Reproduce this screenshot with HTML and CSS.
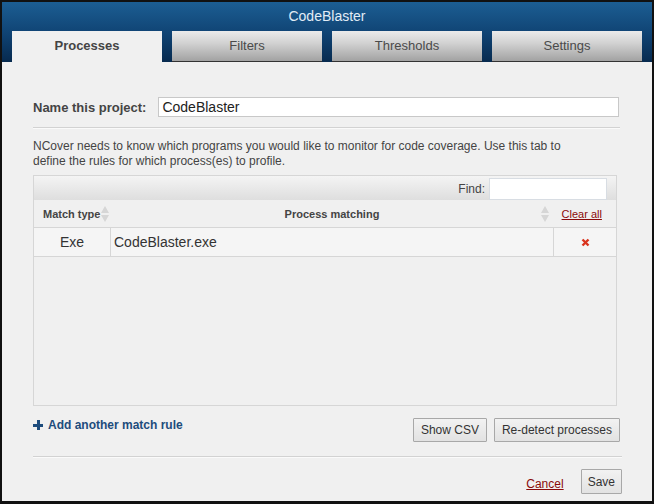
FILE: index.html
```html
<!DOCTYPE html>
<html>
<head>
  <meta charset="UTF-8"/>
  <title>CodeBlaster</title>
  <link rel="stylesheet" href="styles.css">
</head>
<body>
<div class="window">
  <div class="titlebar">
    <div class="title">CodeBlaster</div>
    <ul class="tabs">
      <li class="tab active">Processes</li>
      <li class="tab">Filters</li>
      <li class="tab">Thresholds</li>
      <li class="tab">Settings</li>
    </ul>
  </div>
  <div class="content">
    <div class="nameRow">
      <label for="projectName">Name this project:</label>
      <input id="projectName" value="CodeBlaster"/>
    </div>
    <div class="rule"></div>
    <p class="intro">NCover needs to know which programs you would like to monitor for code coverage. Use this tab to define the rules for which process(es) to profile.</p>

    <div class="grid">
      <div class="toolbar">
        <label for="find">Find:</label>
        <input id="find"/>
      </div>
      <table>
        <thead>
          <tr>
            <th class="colType">Match type<svg class="sortIcon typeSort" width="8" height="16" viewBox="0 0 8 16"><path d="M4 0 L8 7 L0 7 Z M0 9 L8 9 L4 16 Z" fill="#d6d6d6"/></svg></th>
            <th class="colMatch">Process matching<svg class="sortIcon matchSort" width="8" height="16" viewBox="0 0 8 16"><path d="M4 0 L8 7 L0 7 Z M0 9 L8 9 L4 16 Z" fill="#d6d6d6"/></svg></th>
            <th class="colDel"><a href="#">Clear all</a></th>
          </tr>
        </thead>
        <tbody>
          <tr>
            <td class="colType">Exe</td>
            <td class="colMatch">CodeBlaster.exe</td>
            <td class="colDel">
              <svg width="9" height="9" viewBox="0 0 9 9"><path d="M1.5 1.5 L7.5 7.5 M7.5 1.5 L1.5 7.5" stroke="#d9341f" stroke-width="2.4"/></svg>
            </td>
          </tr>
        </tbody>
      </table>
    </div>

    <div class="actions">
      <a class="addRule" href="#"><span class="plus"></span>Add another match rule</a>
      <div class="buttons">
        <button type="button">Show CSV</button>
        <button type="button">Re-detect processes</button>
      </div>
    </div>
    <div class="rule bottomRule"></div>
    <div class="footer">
      <a href="#" class="cancel">Cancel</a>
      <button type="button">Save</button>
    </div>
  </div>
</div>
</body>
</html>
```

FILE: styles.css
```css
html, body {
  margin: 0;
  padding: 0;
  background: #000;
}
body {
  font-family: "Liberation Sans", Arial, sans-serif;
  color: #444;
}
.window {
  width: 654px;
  height: 504px;
  box-sizing: border-box;
  border: 2px solid #111;
  border-bottom-width: 3px;
  background: #f0f0f0;
  display: flex;
  flex-direction: column;
}

/* title + tabs */
.titlebar {
  background: linear-gradient(#1c5e93, #0f4272 55%, #072a4f);
}
.title {
  height: 29px;
  line-height: 28px;
  text-align: center;
  font-size: 14px;
  color: #e2ecf6;
}
.tabs {
  list-style: none;
  margin: 0;
  padding: 0 0 0 10px;
  display: flex;
  gap: 10px;
}
.tab {
  width: 150px;
  height: 30px;
  line-height: 29px;
  text-align: center;
  font-size: 13px;
  color: #4a4a4a;
  background: linear-gradient(#ebebeb, #d2d2d2 40%, #a2a2a2);
  border-bottom: 1px solid #333;
}
.tab.active {
  background: #f0f0f0;
  border-bottom-color: #f0f0f0;
  font-weight: bold;
  color: #444;
}

/* body */
.content {
  flex: 1;
  padding: 35px 32px 0 31px;
  display: flex;
  flex-direction: column;
}
.nameRow {
  display: flex;
  align-items: center;
  gap: 12px;
}
.nameRow label {
  font-size: 13px;
  font-weight: bold;
}
.nameRow input {
  flex: 1;
  height: 20px;
  box-sizing: border-box;
  border: 1px solid #c8c8c8;
  padding: 0 3px;
  font: 14px "Liberation Sans", Arial, sans-serif;
  color: #222;
  margin-right: 1px;
}
.rule {
  border-top: 1px solid #d2d2d2;
  border-bottom: 1px solid #fafafa;
  margin-top: 10px;
}
.intro {
  max-width: 556px;
  margin: 10px 0 6px;
  font-size: 12px;
  line-height: 15px;
  color: #444;
}

/* grid */
.grid {
  width: 584px;
  height: 231px;
  box-sizing: border-box;
  border: 1px solid #d6d6d6;
  background: #f0f0f0;
}
.toolbar {
  height: 24px;
  box-sizing: border-box;
  padding: 2px 9px 0 0;
  display: flex;
  justify-content: flex-end;
  align-items: center;
  gap: 4px;
  background: linear-gradient(#f4f4f4, #dedede);
  font-size: 12px;
}
.toolbar input {
  width: 118px;
  height: 22px;
  box-sizing: border-box;
  border: 1px solid #d8dde3;
  background: #fff;
}
table {
  width: 100%;
  border-collapse: collapse;
}
th {
  height: 27px;
  font-size: 11px;
  font-weight: bold;
  color: #444;
  border-bottom: 1px solid #d6d6d6;
  padding: 0;
  text-align: center;
  position: relative;
}
th.colType {
  text-align: left;
  padding-left: 9px;
}
.sortIcon {
  position: absolute;
  top: 6px;
}
.typeSort {
  right: 2px;
}
.matchSort {
  right: 5px;
}
th.colDel a {
  font-weight: normal;
  font-size: 11px;
  color: #8a0a0a;
  padding-right: 6px;
}
td {
  height: 28px;
  background: #f5f5f5;
  border-bottom: 1px solid #d6d6d6;
  font-size: 14px;
  color: #333;
  padding: 0;
}
td.colType {
  width: 76px;
  text-align: center;
  border-right: 1px solid #d6d6d6;
}
td.colMatch {
  padding-left: 3px;
}
td.colDel {
  width: 62px;
  text-align: center;
  border-left: 1px solid #d6d6d6;
}
td.colDel svg {
  display: block;
  margin: 1px auto 0;
}

/* bottom */
.actions {
  margin-top: 12px;
  display: flex;
  justify-content: space-between;
  align-items: flex-start;
}
.addRule {
  display: flex;
  align-items: center;
  gap: 5px;
  font-size: 12px;
  font-weight: bold;
  color: #1d4c7c;
  text-decoration: none;
}
.plus {
  width: 10px;
  height: 10px;
  background:
    linear-gradient(#1d4c7c, #1d4c7c) 0 4px / 10px 3px no-repeat,
    linear-gradient(#1d4c7c, #1d4c7c) 4px 0 / 3px 10px no-repeat;
}
.buttons {
  display: flex;
  gap: 7px;
}
button {
  height: 24px;
  padding: 0 7px;
  font: 12px "Liberation Sans", Arial, sans-serif;
  color: #333;
  border: 1px solid #a8a8a8;
  border-radius: 1px;
  background: linear-gradient(#f2f2f2, #e2e2e2);
}
.bottomRule {
  margin-top: 14px;
  margin-right: -2px;
}
.footer {
  margin-top: 11px;
  margin-right: -2px;
  display: flex;
  justify-content: flex-end;
  align-items: center;
  gap: 17px;
}
.cancel {
  font-size: 12px;
  color: #8a0a0a;
  margin-top: 4px;
}
.footer button {
  height: 25px;
  padding: 0 6px;
}
```
